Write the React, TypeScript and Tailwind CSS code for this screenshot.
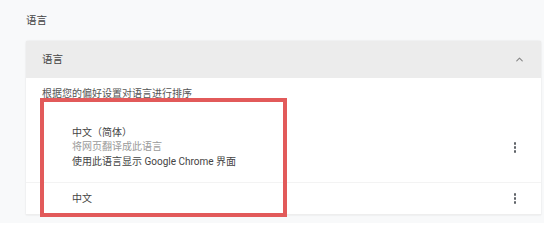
import { ChevronUp } from "lucide-react";

const font = "font-['Roboto','Noto_Sans_CJK_SC',sans-serif]";

function Kebab() {
  return (
    <span className="flex flex-col items-center gap-[1.5px]">
      <span className="h-[2.5px] w-[2.5px] rounded-full bg-[#5f6368]" />
      <span className="h-[2.5px] w-[2.5px] rounded-full bg-[#5f6368]" />
      <span className="h-[2.5px] w-[2.5px] rounded-full bg-[#5f6368]" />
    </span>
  );
}

export default function App() {
  return (
    <div className={`h-[223px] w-[544px] overflow-hidden bg-[#f8f9fa] ${font}`}>
      <div className="pl-[26px] pr-[3px] pt-[14px]">
        <h2 className="text-[10.5px] leading-[14px] text-[#444]">语言</h2>

        <div className="relative mt-[13px] rounded-t-[2px] bg-white shadow-[0_0_2px_rgba(0,0,0,0.12)]">
          <div className="flex h-[37px] items-center justify-between bg-[#ececec] pl-[16px] pr-[16px]">
            <span className="text-[10.5px] text-[#444]">语言</span>
            <ChevronUp size={11} strokeWidth={2.5} className="text-[#888]" />
          </div>

          <p className="pl-[16px] pt-[10px] text-[10px] leading-[12px] text-[#555]">
            根据您的偏好设置对语言进行排序
          </p>

          <div className="mt-[9px]">
            <div className="flex h-[74px] items-center justify-between border-b border-[#f3f3f3] pl-[46px] pr-[25px] pt-[4px]">
              <div className="flex flex-col text-[10px] leading-[14.5px]">
                <span className="text-[#444]">中文（简体）</span>
                <span className="text-[#9a9a9a]">将网页翻译成此语言</span>
                <span className="text-[#444]">使用此语言显示 Google Chrome 界面</span>
              </div>
              <Kebab />
            </div>
            <div className="flex h-[32px] items-center justify-between border-b border-[#eee] pl-[46px] pr-[25px]">
              <span className="text-[10px] text-[#444]">中文</span>
              <Kebab />
            </div>
          </div>

          <div className="pointer-events-none absolute left-[14px] top-[57px] h-[119px] w-[247px] border-[4px] border-[#e25a5a]" />
        </div>
      </div>
    </div>
  );
}
